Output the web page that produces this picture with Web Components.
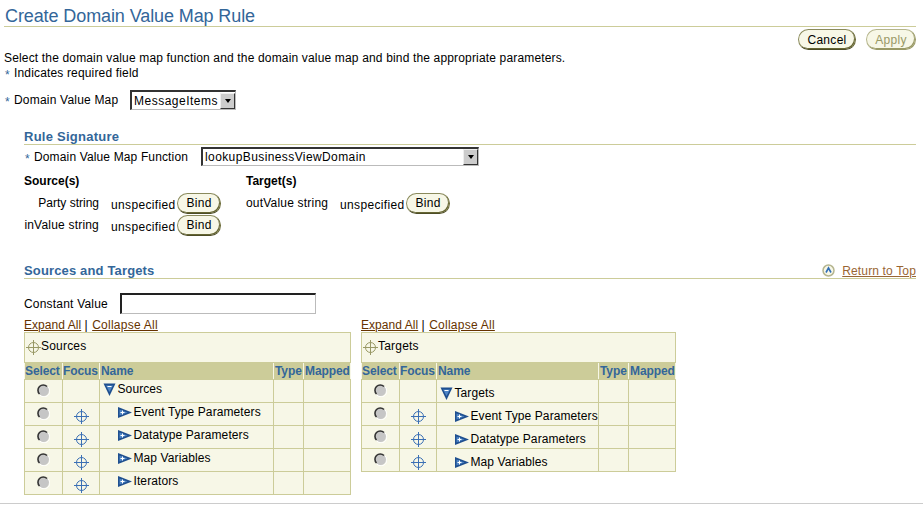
<!DOCTYPE html>
<html>
<head>
<meta charset="utf-8">
<title>Create Domain Value Map Rule</title>
<style>
  html, body { margin: 0; background: #fff; }
  body {
    color: #000;
    font: 12px "Liberation Sans", Arial, sans-serif;
    height: 505px;
    overflow: hidden;
    width: 923px;
  }
</style>
</head>
<body>
<domain-map-page></domain-map-page>

<script>
const define = (name, render) => customElements.define(name, class extends HTMLElement {
  connectedCallback() {
    if (this.shadowRoot) return
    this.attachShadow({ mode: 'open' }).innerHTML = render(this)
  }
})

const attr = (el, name, fallback = '') => el.hasAttribute(name) ? el.getAttribute(name) : fallback

define('page-title', () => `
  <style>
    :host {
      border-bottom: 1px solid #cccc99;
      color: #336699;
      display: block;
      font-size: 18px;
      height: 26px;
      letter-spacing: -.1px;
      line-height: 32px;
      margin: 0 7px 0 4px;
    }
    div { height: 26px; overflow: hidden; padding-left: 1px; }
  </style>
  <div><slot></slot></div>
`)

define('section-head', el => `
  <style>
    :host {
      align-items: flex-end;
      border-bottom: 1px solid #cccc99;
      color: #336699;
      display: flex;
      font-size: 13px;
      font-weight: 700;
      height: 17px;
      justify-content: space-between;
      line-height: 15px;
      margin: 0 7px 0 24px;
    }
    span { letter-spacing: ${attr(el, 'spacing', '.25')}px; }
    ::slotted(*) { font-weight: 400; }
  </style>
  <span>${attr(el, 'label')}</span>
  <slot></slot>
`)

define('pill-button', el => {
  const off = el.hasAttribute('disabled')
  return `
  <style>
    :host {
      align-items: center;
      background: #f7f7e7;
      border: 1px solid;
      border-color: ${off ? '#b5b58c' : '#8a8a5c'} ${off ? '#999966' : '#666633'} ${off ? '#999966' : '#4d4d26'} ${off ? '#b5b58c' : '#8a8a5c'};
      border-radius: 11px;
      box-shadow: inset -1px -1px 0 ${off ? '#999966' : '#666633'};
      box-sizing: border-box;
      color: ${off ? '#999966' : '#000'};
      display: inline-flex;
      height: ${attr(el, 'height', '21')}px;
      justify-content: center;
      letter-spacing: .3px;
      width: ${attr(el, 'width', '44')}px;
    }
  </style>
  <slot></slot>`
})

define('req-mark', () => `
  <style>
    :host { color: #336699; display: inline-block; font-size: 12px; padding-left: 1px; width: 9px; }
    span { display: inline-block; transform: translateY(2px); }
  </style>
  <span>*</span>
`)

define('drop-list', el => `
  <style>
    :host {
      align-items: center;
      background: #fff;
      border-color: #333 #bbb #bbb #333;
      border-style: solid;
      border-width: 2px 1px 1px 2px;
      box-sizing: border-box;
      display: flex;
      height: ${attr(el, 'height', '20')}px;
      justify-content: space-between;
      width: ${attr(el, 'width', '106')}px;
    }
    span { letter-spacing: ${attr(el, 'spacing', '.35')}px; padding-left: 2px; }
    i {
      align-items: center;
      background: #ccc;
      border: 1px solid;
      border-color: #eee #333 #333 #eee;
      box-sizing: border-box;
      display: flex;
      height: 16px;
      justify-content: center;
      width: 15px;
    }
    i:after {
      border-left: 3.5px solid transparent;
      border-right: 3.5px solid transparent;
      border-top: 4px solid #000;
      content: "";
    }
  </style>
  <span><slot></slot></span><i></i>
`)

define('text-box', el => `
  <style>
    :host {
      background: #fff;
      border-color: #222 #bbb #bbb #222;
      border-style: solid;
      border-width: 2px 1px 1px 2px;
      box-sizing: border-box;
      display: block;
      height: 21px;
      width: ${attr(el, 'width', '196')}px;
    }
  </style>
`)

define('bind-row', el => `
  <style>
    :host {
      align-items: center;
      display: grid;
      grid-template-columns: ${attr(el, 'label-width', '75')}px 12px 66px 44px;
      height: 22px;
    }
    .label { letter-spacing: ${attr(el, 'spacing', '.1')}px; text-align: right; white-space: nowrap; }
    .value { grid-column: 3; letter-spacing: .35px; padding-top: 4px; }
  </style>
  <span class="label">${attr(el, 'label')}</span>
  <span class="value">unspecified</span>
  <pill-button>Bind</pill-button>
`)

const icons = {
  crosshair: color => `
    <svg width="15" height="15" viewBox="0 0 15 15" fill="none" stroke="${color}">
      <circle cx="7.5" cy="7.5" r="5"/>
      <path d="M7.5 0v15M0 7.5h15"/>
    </svg>`,
  radio: `
    <svg width="13" height="13" viewBox="0 0 13 13">
      <circle cx="6.5" cy="6.5" r="5.5" fill="#c6c6c6"/>
      <path d="M2.5 10A5 5 0 0 1 10 2.5" fill="none" stroke="#333" stroke-width="1.6"/>
      <path d="M3 11.2A5.7 5.7 0 0 0 11.2 3" fill="none" stroke="#fff" stroke-width="1"/>
    </svg>`,
  open: `
    <svg width="14" height="13" viewBox="0 0 14 13">
      <path d="M.5 .5h12L6.5 13z" fill="#1f4f8f"/>
      <path d="M3 2.5h7L6.5 9z" fill="#4f86c6"/>
      <path d="M4.5 3.5h4" stroke="#fff" fill="none"/>
    </svg>`,
  closed: `
    <svg width="15" height="11" viewBox="0 0 15 11">
      <path d="M0 0v11L14 5.5z" fill="#1f4f8f"/>
      <path d="M1.5 2.5v6L9.5 5.5z" fill="#4f86c6"/>
      <path d="M2.5 5.5h4M4.5 3.5v4" stroke="#fff" fill="none"/>
    </svg>`
}

define('tree-table', el => {
  const rows = JSON.parse(attr(el, 'rows', '[]'))
  const widths = attr(el, 'cols').split(',')
  return `
  <style>
    :host { display: block; width: ${widths.reduce((a, b) => a + +b, 0)}px; }
    table {
      background: #f7f7e7;
      border-collapse: collapse;
      table-layout: fixed;
      width: 100%;
    }
    td, th {
      border: 1px solid #cccc99;
      box-sizing: border-box;
      font-size: 12px;
      font-weight: 400;
      padding: 0;
    }
    .caption td { height: 30px; padding: 0 0 0 1px; }
    .caption div { align-items: center; display: flex; letter-spacing: .2px; margin-top: -4px; }
    .caption svg { margin-top: 3px; }
    th {
      background: #cccc99;
      border-color: #cccc99 #f7f7e7;
      color: #336699;
      font-weight: 700;
      height: 17px;
      letter-spacing: -.1px;
      text-align: left;
      white-space: nowrap;
    }
    th:nth-child(n+3) { padding-left: 1px; }
    tbody td { height: 23px; }
    .center { line-height: 0; text-align: center; }
    .radio svg { margin-bottom: 2px; }
    .focus svg { margin-top: 4px; }
    .name div {
      align-items: center;
      display: flex;
      letter-spacing: .1px;
      padding: ${attr(el, 'text-pad', '0')};
      white-space: nowrap;
    }
    .name svg { margin-right: .5px; }
  </style>
  <table>
    <colgroup>${widths.map(w => `<col style="width:${w}px">`).join('')}</colgroup>
    <thead>
      <tr class="caption"><td colspan="5"><div>${icons.crosshair('#999966')}<span>${attr(el, 'label')}</span></div></td></tr>
      <tr><th>Select</th><th>Focus</th><th>Name</th><th>Type</th><th>Mapped</th></tr>
    </thead>
    <tbody>
      ${rows.map((name, i) => `
        <tr>
          <td class="center radio">${icons.radio}</td>
          <td class="center focus">${i ? icons.crosshair('#3b70b5') : ''}</td>
          <td class="name"><div style="padding-left:${i ? 18 : 3}px">${i ? icons.closed : icons.open}<span>${name}</span></div></td>
          <td></td>
          <td></td>
        </tr>`).join('')}
    </tbody>
  </table>`
})

define('tree-panel', () => `
  <style>
    :host { display: block; }
    .links { height: 14px; letter-spacing: .05px; line-height: 14px; white-space: nowrap; }
    a { color: #663300; text-decoration: underline; }
    a + a { letter-spacing: .25px; margin-left: 1px; }
  </style>
  <div class="links"><a href="#">Expand All</a> | <a href="#">Collapse All</a></div>
  <slot></slot>
`)

define('domain-map-page', () => `
  <style>
    :host { display: block; }
    .toolbar {
      display: flex;
      gap: 10px;
      height: 21px;
      justify-content: flex-end;
      margin-top: 2px;
      padding-right: 7px;
    }
    .intro { letter-spacing: .16px; line-height: 15px; padding: 1px 0 0 4px; }
    .field { align-items: center; display: flex; letter-spacing: .14px; white-space: nowrap; }
    .map { letter-spacing: .2px; margin-top: 9px; padding-left: 4px; }
    .map .label { width: 116px; }
    .rule { margin-top: 17px; }
    .fn { margin-top: 2px; padding-left: 24px; }
    .fn .label { width: 167px; }
    .bindings {
      display: grid;
      grid-template-columns: 222px auto;
      margin-top: 8px;
      padding-left: 24px;
    }
    .bindings b { display: block; height: 14px; line-height: 14px; margin-bottom: 4px; }
    .sources { margin-top: 25px; }
    .top { align-items: center; display: flex; font-size: 12px; gap: 7px; letter-spacing: .15px; margin-bottom: -1px; }
    .top a { color: #996633; }
    .top svg { margin-top: -2px; }
    .constant { letter-spacing: .2px; margin-top: 14px; padding-left: 24px; }
    .constant .label { width: 96px; }
    .panels { display: flex; gap: 11px; margin-top: 4px; padding-left: 24px; }
    .rule-foot { border-top: 1px solid #ccc; margin-top: 8px; }
  </style>

  <page-title>Create Domain Value Map Rule</page-title>

  <div class="toolbar">
    <pill-button width="58">Cancel</pill-button>
    <pill-button width="50" disabled>Apply</pill-button>
  </div>

  <div class="intro">
    Select the domain value map function and the domain value map and bind the appropriate parameters.<br>
    <req-mark></req-mark>Indicates required field
  </div>

  <div class="field map">
    <req-mark></req-mark>
    <span class="label">Domain Value Map</span>
    <drop-list spacing=".5">MessageItems</drop-list>
  </div>

  <section-head class="rule" label="Rule Signature"></section-head>

  <div class="field fn">
    <req-mark></req-mark>
    <span class="label">Domain Value Map Function</span>
    <drop-list width="278" height="19" spacing=".4">lookupBusinessViewDomain</drop-list>
  </div>

  <div class="bindings">
    <div>
      <b>Source(s)</b>
      <bind-row label="Party string" spacing="0"></bind-row>
      <bind-row label="inValue string" spacing=".2"></bind-row>
    </div>
    <div>
      <b>Target(s)</b>
      <bind-row label="outValue string" label-width="82" spacing=".2"></bind-row>
    </div>
  </div>

  <section-head class="sources" label="Sources and Targets" spacing=".15">
    <span class="top">
      <svg width="13" height="13" viewBox="0 0 13 13">
        <circle cx="6.5" cy="6.5" r="5.5" fill="#f7f7e7" stroke="#b5b58f" stroke-width="1.5"/>
        <path d="M4 8.5 6.5 4 9 8.5" fill="none" stroke="#2f6db5" stroke-width="1.6"/>
      </svg>
      <a href="#">Return to Top</a>
    </span>
  </section-head>

  <div class="field constant">
    <span class="label">Constant Value</span>
    <text-box></text-box>
  </div>

  <div class="panels">
    <tree-panel>
      <tree-table label="Sources" cols="38,37,174,30,47" text-pad="0 0 4px" rows='["Sources","Event Type Parameters","Datatype Parameters","Map Variables","Iterators"]'></tree-table>
    </tree-panel>
    <tree-panel>
      <tree-table label="Targets" cols="38,37,162,30,47" text-pad="4px 0 0" rows='["Targets","Event Type Parameters","Datatype Parameters","Map Variables"]'></tree-table>
    </tree-panel>
  </div>

  <div class="rule-foot"></div>
`)
</script>
</body>
</html>
